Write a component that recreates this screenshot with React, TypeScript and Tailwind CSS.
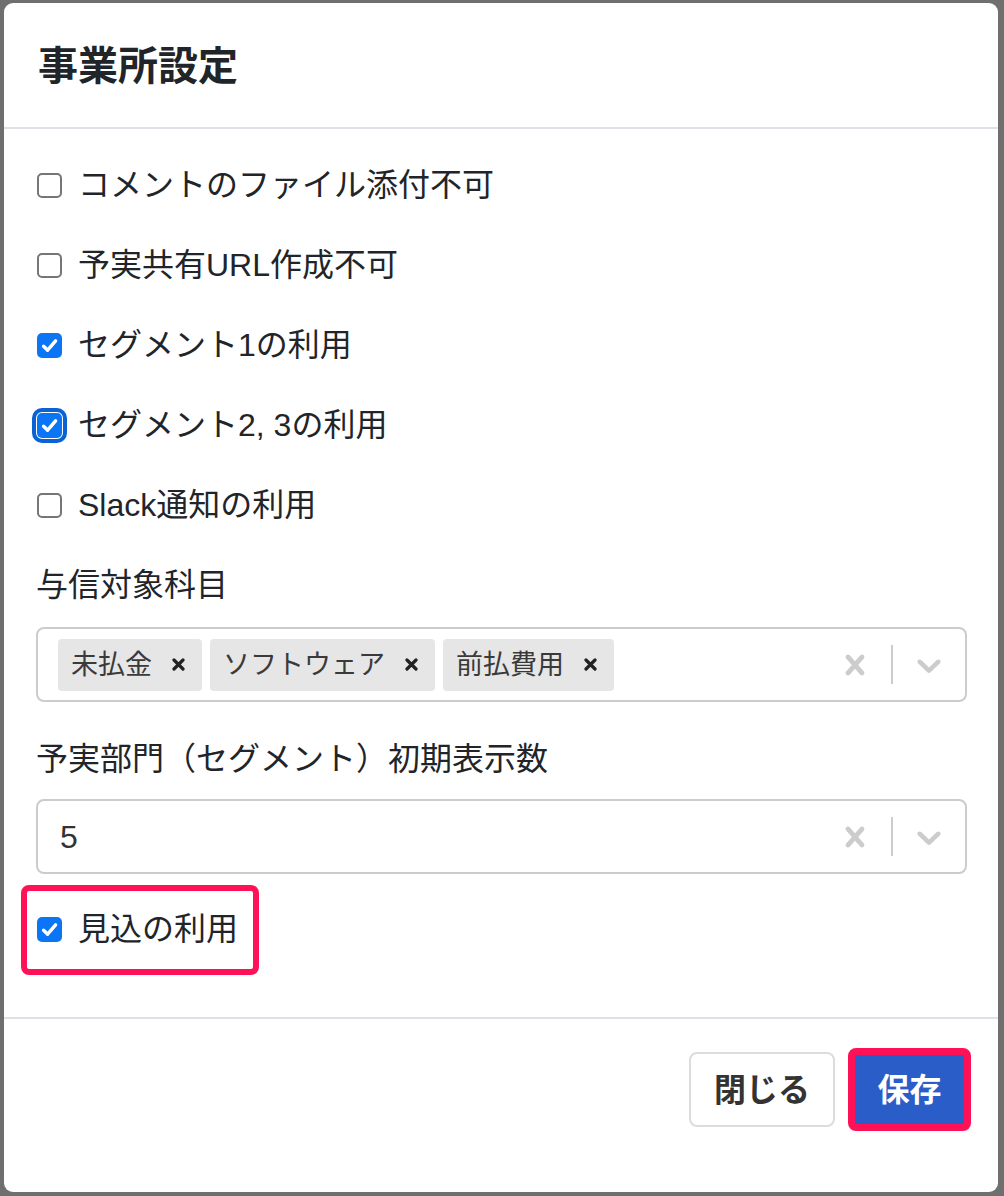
import React from "react";

const FONT = {
  fontFamily: '"Liberation Sans", "Noto Sans CJK JP", sans-serif',
};

function Check({ checked, focused }: { checked: boolean; focused?: boolean }) {
  if (!checked) {
    return (
      <span className="block w-[25px] h-[25px] shrink-0 rounded-[5px] border-2 border-[#767676] bg-white" />
    );
  }
  return (
    <span
      className={
        "flex w-[25px] h-[25px] shrink-0 items-center justify-center rounded-[5px] bg-[#0a76f6] " +
        (focused ? "outline-4 outline-offset-[1px] outline-[#0b63d3]" : "")
      }
    >
      <svg width="19" height="19" viewBox="0 0 19 19">
        <path
          d="M3.6 10.2 L7.6 14.2 L15.6 4.8"
          fill="none"
          stroke="#ffffff"
          strokeWidth="3.4"
          strokeLinecap="round"
          strokeLinejoin="round"
        />
      </svg>
    </span>
  );
}

function CheckRow({
  label,
  checked,
  focused,
  className = "",
}: {
  label: string;
  checked: boolean;
  focused?: boolean;
  className?: string;
}) {
  return (
    <div className={"flex h-[48px] items-center pl-[1px] " + className}>
      <Check checked={checked} focused={focused} />
      <span className="ml-[16px] text-[32px] leading-[48px] text-[#212529]">{label}</span>
    </div>
  );
}

function ClearIcon() {
  return (
    <svg width="40" height="40" viewBox="0 0 20 20" fill="#cccccc">
      <path d="M14.348 14.849c-0.469 0.469-1.229 0.469-1.697 0l-2.651-3.030-2.651 3.029c-0.469 0.469-1.229 0.469-1.697 0-0.469-0.469-0.469-1.229 0-1.697l2.758-3.15-2.759-3.152c-0.469-0.469-0.469-1.228 0-1.697s1.228-0.469 1.697 0l2.652 3.031 2.651-3.031c0.469-0.469 1.228-0.469 1.697 0s0.469 1.229 0 1.697l-2.758 3.152 2.758 3.15c0.469 0.469 0.469 1.229 0 1.698z" />
    </svg>
  );
}

function ChevronIcon() {
  return (
    <svg width="40" height="40" viewBox="0 0 20 20" fill="#cccccc">
      <path d="M4.516 7.548c0.436-0.446 1.043-0.481 1.576 0l3.908 3.747 3.908-3.747c0.533-0.481 1.141-0.446 1.574 0 0.436 0.445 0.408 1.197 0 1.615-0.406 0.418-4.695 4.502-4.695 4.502-0.217 0.223-0.502 0.335-0.787 0.335s-0.57-0.112-0.789-0.335c0 0-4.287-4.084-4.695-4.502s-0.436-1.17 0-1.615z" />
    </svg>
  );
}

function Indicators() {
  return (
    <div className="flex shrink-0 items-stretch">
      <div className="flex w-[72px] items-center justify-center">
        <ClearIcon />
      </div>
      <span className="my-[16px] w-[2px] bg-[#cccccc]" />
      <div className="flex w-[72px] items-center justify-center">
        <ChevronIcon />
      </div>
    </div>
  );
}

function Tag({ label }: { label: string }) {
  return (
    <div className="flex h-[52px] items-center rounded-[4px] bg-[#e6e6e6] pl-[13px] pr-[17px]">
      <span className="text-[27px] leading-[52px] text-[#3a3a3a]">{label}</span>
      <svg className="ml-[20px]" width="13" height="13" viewBox="0 0 13 13">
        <path d="M2 2 L11 11 M11 2 L2 11" stroke="#222222" strokeWidth="3.2" strokeLinecap="round" />
      </svg>
    </div>
  );
}

export default function App() {
  return (
    <div className="min-h-[1196px] w-full bg-[#6f6f6f] pt-[3px] pl-[4px]" style={FONT}>
      <div className="flex h-[1189px] w-[994px] flex-col rounded-[9px] bg-white">
        {/* Header */}
        <div className="flex h-[126px] shrink-0 items-center border-b-2 border-[#dee2e6] px-[34px] pt-[2px]">
          <h1 className="text-[40px] font-bold leading-[60px] text-[#212529]">事業所設定</h1>
        </div>

        {/* Body */}
        <div className="flex flex-col px-[32px] pt-[32px]">
          <CheckRow label="コメントのファイル添付不可" checked={false} className="mb-[32px]" />
          <CheckRow label="予実共有URL作成不可" checked={false} className="mb-[32px]" />
          <CheckRow label="セグメント1の利用" checked={true} className="mb-[32px]" />
          <CheckRow label="セグメント2, 3の利用" checked={true} focused className="mb-[32px]" />
          <CheckRow label="Slack通知の利用" checked={false} className="mb-[32px]" />

          <div className="mb-[18px] h-[48px] text-[32px] leading-[48px] text-[#212529]">与信対象科目</div>
          <div className="mb-[33px] flex h-[75px] w-[931px] rounded-[8px] border-2 border-[#cccccc] bg-white">
            <div className="flex flex-1 items-center gap-[8px] pl-[20px]">
              <Tag label="未払金" />
              <Tag label="ソフトウェア" />
              <Tag label="前払費用" />
            </div>
            <Indicators />
          </div>

          <div className="mb-[16px] h-[48px] text-[32px] leading-[48px] text-[#212529]">
            予実部門（セグメント）初期表示数
          </div>
          <div className="mb-[31px] flex h-[75px] w-[931px] rounded-[8px] border-2 border-[#cccccc] bg-white">
            <div className="flex flex-1 items-center pl-[22px] text-[32px] text-[#333333]">5</div>
            <Indicators />
          </div>

          <div className="relative">
            <CheckRow label="見込の利用" checked={true} />
            <div className="pointer-events-none absolute left-[-15px] top-[-20px] h-[90px] w-[238px] rounded-[8px] border-[6px] border-[#ff1158]" />
          </div>
        </div>

        {/* Footer */}
        <div className="mt-[64px] flex items-center justify-end gap-[13px] border-t-2 border-[#dee2e6] pr-[27px] pt-[29px]">
          <button className="flex h-[75px] w-[146px] items-center justify-center rounded-[8px] border-2 border-[#dcdcdc] bg-white text-[32px] font-bold text-[#333333]">
            閉じる
          </button>
          <div className="rounded-[8px] border-[7px] border-[#ff1158]">
            <button className="flex h-[69px] w-[109px] items-center justify-center bg-[#2b5dc9] text-[32px] font-bold text-white">
              保存
            </button>
          </div>
        </div>
      </div>
    </div>
  );
}
